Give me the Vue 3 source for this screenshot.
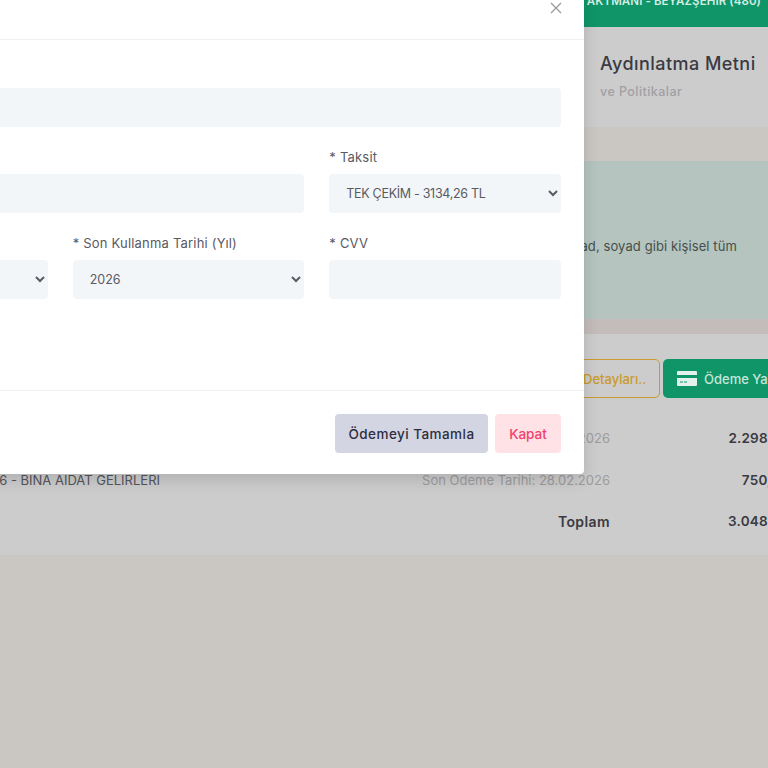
<script setup>
import { ref } from 'vue';

const taksit = ref('1');
const ay = ref('01');
const yil = ref('2026');

const rows = [
  { name: '2026 - BINA AIDAT GELIRLERI', date: 'Son Ödeme Tarihi: 28.01.2026', amount: '2.298,26 TL' },
  { name: '2026 - BINA AIDAT GELIRLERI', date: 'Son Ödeme Tarihi: 28.02.2026', amount: '750,00 TL' },
];
</script>

<template>
  <div class="page">
    <div class="topbar">
      <span class="site">AKTMANI - BEYAZŞEHİR (480)</span>
    </div>
    <div class="info-card">
      <h2>Aydınlatma Metni</h2>
      <p>ve Politikalar</p>
    </div>
    <div class="alert">
      <span>Kartınız üzerindeki ad, soyad gibi kişisel tüm</span>
    </div>
    <div class="debts">
      <div class="debt-actions">
        <button class="btn-detail">Detayları..</button>
        <button class="btn-pay">
          <svg width="20" height="15" viewBox="0 0 20 15">
            <path fill="#e3f1ec" fill-rule="evenodd" d="M1 0h18a1 1 0 0 1 1 1v3H0V1a1 1 0 0 1 1-1zM0 7h20v7a1 1 0 0 1-1 1H1a1 1 0 0 1-1-1zm3 3.5v1h3v-1zm4 0v1h3v-1z" />
          </svg>
          Ödeme Yap
        </button>
      </div>
      <div class="debt-row" v-for="row in rows" :key="row.date">
        <span class="debt-name">{{ row.name }}</span>
        <span class="debt-date">{{ row.date }}</span>
        <b class="debt-amount">{{ row.amount }}</b>
      </div>
      <div class="debt-row total-row">
        <span class="debt-name"></span>
        <b class="debt-date total">Toplam</b>
        <b class="debt-amount">3.048,26 TL</b>
      </div>
    </div>

    <div class="modal">
      <div class="modal-header">
        <span class="modal-title">Kredi Kartı ile Ödeme</span>
        <svg class="close" width="12" height="12" viewBox="0 0 12 12">
          <path d="M1 1l10 10M11 1L1 11" stroke="#9a9a9f" stroke-width="1.3" fill="none" />
        </svg>
      </div>
      <div class="modal-body">
        <div class="field span3">
          <label>* Kart Üzerindeki İsim</label>
          <input type="text" />
        </div>
        <div class="field span2">
          <label>* Kart Numarası</label>
          <input type="text" />
        </div>
        <div class="field">
          <label>* Taksit</label>
          <select class="taksit" v-model="taksit">
            <option value="1">TEK ÇEKİM - 3134,26 TL</option>
          </select>
        </div>
        <div class="field">
          <label>* Son Kullanma Tarihi (Ay)</label>
          <select v-model="ay">
            <option value="01">01</option>
          </select>
        </div>
        <div class="field">
          <label>* Son Kullanma Tarihi (Yıl)</label>
          <select v-model="yil">
            <option value="2026">2026</option>
          </select>
        </div>
        <div class="field">
          <label>* CVV</label>
          <input type="text" />
        </div>
      </div>
      <div class="modal-footer">
        <button class="btn-complete">Ödemeyi Tamamla</button>
        <button class="btn-close">Kapat</button>
      </div>
    </div>
  </div>
</template>

<style scoped>
.page {
  position: relative;
  width: 768px;
  height: 768px;
  overflow: hidden;
  background-color: #cac7c2;
  font-family: Inter, "Noto Sans", sans-serif;
  color: #3f4048;
}

.topbar {
  height: 27px;
  background-color: #0f9568;
  display: flex;
  justify-content: flex-end;
  align-items: flex-start;
  padding-right: 7px;
  color: #d5ece3;
  font-size: 11.5px;
  font-weight: 600;
  letter-spacing: 0.1px;
  line-height: 2px;
}

.info-card {
  height: 100px;
  background-color: #cccccc;
  padding: 25px 0 0 600px;
  box-sizing: border-box;
}

.info-card h2 {
  margin: 0;
  font-size: 18px;
  font-weight: 500;
  line-height: 24px;
  letter-spacing: 0.45px;
  color: #3a3a42;
}

.info-card p {
  margin: 7px 0 0;
  font-size: 12.5px;
  font-weight: 500;
  line-height: 18px;
  letter-spacing: 0.45px;
  color: #a0a0a4;
}

.alert {
  height: 173px;
  margin-top: 34px;
  background-color: #b5c4be;
  border-bottom: 15px solid #c3bcba;
  display: flex;
  justify-content: flex-end;
  padding: 76px 31px 0 0;
  box-sizing: border-box;
  font-size: 13px;
  line-height: 18px;
  letter-spacing: 0.1px;
  white-space: nowrap;
  color: #45504c;
}

.debts {
  height: 221px;
  background-color: #cccccc;
  padding-top: 25px;
  box-sizing: border-box;
}

.debt-actions {
  display: flex;
  gap: 3px;
  margin-left: 575px;
  width: 300px;
}

.debt-actions button {
  height: 39px;
  border-radius: 5px;
  font-family: inherit;
  font-size: 13px;
  font-weight: 500;
  box-sizing: border-box;
}

.btn-detail {
  width: 85px;
  flex: none;
  background: transparent;
  border: 1px solid #c99a2e;
  color: #c99a2e;
  padding: 0 0 0 7px;
  text-align: left;
}

.btn-pay {
  width: 130px;
  flex: none;
  background-color: #0f9568;
  border: none;
  color: #c5e6da;
  display: flex;
  align-items: center;
  gap: 7px;
  padding: 0 0 0 14px;
  white-space: nowrap;
}

.debt-row {
  display: flex;
  height: 42px;
  align-items: center;
  font-size: 13px;
  white-space: nowrap;
}

.debt-actions + .debt-row {
  margin-top: 19px;
}

.total-row {
  margin-top: -1px;
}

.debt-name {
  flex: none;
  width: 160px;
  display: flex;
  justify-content: flex-end;
  overflow: hidden;
  color: #55555c;
}

.debt-date {
  flex: none;
  width: 450px;
  text-align: right;
  color: #9c9c9f;
}

.debt-date.total {
  color: #3a3a42;
  font-size: 14px;
  font-weight: 600;
  letter-spacing: 0.4px;
}

.debt-amount {
  flex: none;
  width: 200px;
  text-align: right;
  font-size: 13.5px;
  font-weight: 600;
  letter-spacing: 0.2px;
  color: #3a3a42;
}

.modal {
  position: absolute;
  left: -206px;
  top: -10px;
  width: 790px;
  height: 484px;
  background-color: #fff;
  border-radius: 4px;
  box-shadow: 0 6px 16px rgba(0, 0, 0, 0.14);
  display: flex;
  flex-direction: column;
  box-sizing: border-box;
}

.modal-header {
  height: 50px;
  flex: none;
  border-bottom: 1px solid #f1f1f2;
  display: flex;
  justify-content: space-between;
  align-items: flex-start;
  padding: 12px 23px 0;
  box-sizing: border-box;
}

.close {
  margin: 0 -1px 0 0;
}

.modal-title {
  font-size: 15px;
}

.modal-body {
  flex: 1;
  display: grid;
  grid-template-columns: repeat(3, 1fr);
  column-gap: 25px;
  align-content: start;
  padding: 22px 23px 0 22px;
}

.span3 {
  grid-column: span 3;
}

.span2 {
  grid-column: span 2;
}

.field {
  display: flex;
  flex-direction: column;
  margin-bottom: 21.5px;
}

.field label {
  font-size: 13px;
  line-height: 19px;
  margin-bottom: 7px;
  letter-spacing: 0.2px;
  color: #5a5a62;
}

.field input,
.field select {
  height: 38.5px;
  width: 100%;
  background-color: #f3f6f9;
  border: none;
  border-radius: 4px;
  padding: 0 0 0 13px;
  font-family: inherit;
  font-size: 12.5px;
  color: #5a5a62;
  box-sizing: border-box;
}

.field select.taksit {
  letter-spacing: -0.3px;
}

.modal-footer {
  flex: none;
  height: 84px;
  border-top: 1px solid #f1f1f2;
  display: flex;
  justify-content: flex-end;
  align-items: flex-start;
  gap: 7px;
  padding: 23px 23px 0;
  box-sizing: border-box;
}

.modal-footer button {
  height: 39px;
  border: none;
  border-radius: 4px;
  font-family: inherit;
  font-size: 13.5px;
  font-weight: 500;
  padding: 0;
}

.btn-complete {
  width: 153px;
  background-color: #d3d5e3;
  color: #2e2f3e;
  letter-spacing: 0.45px;
}

.btn-close {
  width: 66px;
  background-color: #ffe2e6;
  color: #f1416c;
}
</style>
